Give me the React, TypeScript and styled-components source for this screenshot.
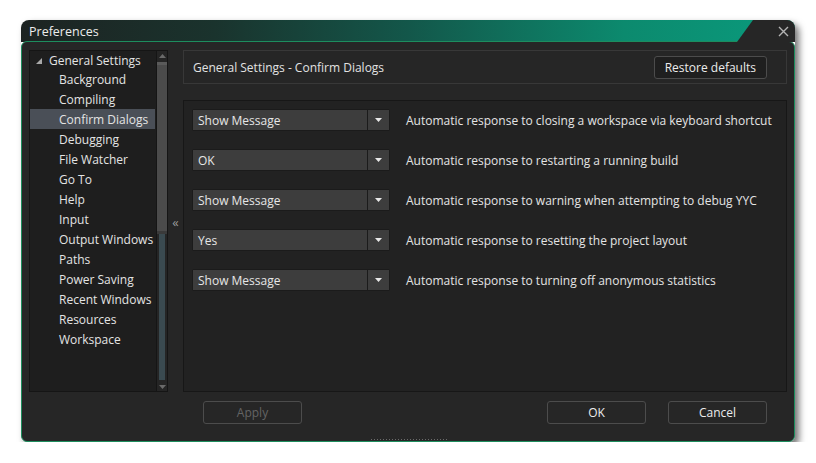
import React, { FC } from 'react'
import styled, { createGlobalStyle } from 'styled-components'

const GlobalStyle = createGlobalStyle`
  html, body {
    margin: 0;
    padding: 0;
    background: #ffffff;
  }
  body {
    font-family: "Open Sans", "Noto Sans", "DejaVu Sans", sans-serif;
    font-size: 12px;
    color: #e2e2e2;
  }
`

const Page = styled.div`
  padding: 20px 0 0 21px;
`

const Window = styled.div`
  position: relative;
  width: 774px;
  display: flex;
  flex-direction: column;
  border-radius: 8px 8px 6px 6px;
  box-shadow: 4px 4px 7px rgba(0, 0, 0, 0.55);
`

const TitleBar = styled.div`
  height: 22px;
  display: flex;
  align-items: stretch;
  border-radius: 8px 8px 0 0;
  background: linear-gradient(90deg, #1d2322 0%, #1a332d 25%, #13574a 50%, #0c8a6e 78%, #0a9b7d 100%);
  overflow: hidden;
`

const Title = styled.div`
  flex: 1;
  padding: 3px 0 0 8px;
  font-size: 12.5px;
  color: #ececec;
`

const CloseTab = styled.div`
  width: 58px;
  display: flex;
  align-items: center;
  justify-content: flex-end;
  padding-right: 6px;
  box-sizing: border-box;
  background: #262626;
  clip-path: polygon(16px 0, 100% 0, 100% 100%, 0 100%);
`

const Body = styled.div`
  height: 401px;
  box-sizing: border-box;
  margin-top: -1px;
  border: 1.5px solid #1d8d5e;
  border-radius: 6px;
  background: #262626;
  padding: 8px 7px 0 7px;
  display: grid;
  grid-template-columns: 139px 15px minmax(0, 1fr);
  grid-template-rows: 342px 1fr;
`

const Sidebar = styled.div`
  display: flex;
  box-sizing: border-box;
  background: #1e1e1e;
  border: 1px solid #151515;
`

const Tree = styled.div`
  flex: 1;
  padding: 1px 1px 0 0;
`

const TreeRow = styled.div<{ $depth: number; $selected?: boolean }>`
  height: ${p => (p.$depth === 0 ? 17 : 20)}px;
  display: flex;
  align-items: center;
  padding-left: ${p => (p.$depth === 0 ? 5 : 29)}px;
  background: ${p => (p.$selected ? '#4a4f57' : 'transparent')};
  color: #e4e4e4;
  white-space: nowrap;
`

const Expander = styled.svg`
  width: 8px;
  height: 8px;
  margin-right: 6px;
`

const ScrollBar = styled.div`
  width: 10px;
  display: flex;
  flex-direction: column;
  align-items: stretch;
  background: #252525;
  border-left: 1px solid #151515;
`

const ScrollArrow = styled.div`
  height: 9px;
  display: flex;
  align-items: center;
  justify-content: center;
`

const Thumb = styled.div`
  height: 166px;
  margin-top: 2px;
  background: #4b4b4b;
  border-top: 3px solid #5a5a5a;
  border-bottom: 3px solid #3a3a3a;
`

const Track = styled.div`
  flex: 1;
  margin: 0 2px 2px;
  background: #3a4a50;
`

const Collapse = styled.div`
  display: flex;
  align-items: center;
  justify-content: center;
  color: #9a9a9a;
  font-size: 13px;
  padding-top: 2px;
`

const Main = styled.div`
  display: flex;
  flex-direction: column;
  gap: 16px;
`

const Header = styled.div`
  height: 34px;
  box-sizing: border-box;
  display: flex;
  align-items: center;
  justify-content: space-between;
  padding: 0 19px 0 9px;
  border: 1px solid #383838;
`

const Button = styled.div<{ $disabled?: boolean; $dark?: boolean }>`
  height: 23px;
  box-sizing: border-box;
  min-width: 99px;
  padding: 0 10px;
  display: flex;
  align-items: center;
  justify-content: center;
  border: 1px solid #4c4c4c;
  border-radius: 3px;
  background: ${p => (p.$dark ? '#1f1f1f' : '#262626')};
  color: ${p => (p.$disabled ? '#646464' : '#ececec')};
`

const Content = styled.div`
  flex: 1;
  background: #222222;
  border: 1px solid #171717;
  padding: 8px 8px;
  display: flex;
  flex-direction: column;
  gap: 18px;
`

const Row = styled.div`
  display: flex;
  align-items: center;
  gap: 16px;
`

const Combo = styled.div`
  width: 198px;
  height: 22px;
  display: flex;
  gap: 1px;
  background: #1b1b1b;
  border: 1px solid #1b1b1b;
  border-radius: 2px;
  box-sizing: border-box;
`

const ComboValue = styled.div`
  flex: 1;
  display: flex;
  align-items: center;
  padding-left: 5px;
  background: #3d3d3d;
  color: #e6e6e6;
`

const ComboButton = styled.div`
  width: 21px;
  display: flex;
  align-items: center;
  justify-content: center;
  background: #3d3d3d;
`

const Label = styled.div`
  color: #e4e4e4;
  white-space: nowrap;
`

const Footer = styled.div`
  grid-column: 3;
  display: flex;
  align-items: flex-start;
  padding: 9px 20px 0 20px;
`

const Spacer = styled.div`
  flex: 1;
`

const ButtonGap = styled.div`
  width: 22px;
`

const Grip = styled.div`
  position: absolute;
  left: 349px;
  bottom: 1px;
  width: 77px;
  height: 3px;
  background-image: radial-gradient(circle, #6a6a6a 0.8px, transparent 1px);
  background-size: 3px 3px;
`

const treeItems = [
  'Background',
  'Compiling',
  'Confirm Dialogs',
  'Debugging',
  'File Watcher',
  'Go To',
  'Help',
  'Input',
  'Output Windows',
  'Paths',
  'Power Saving',
  'Recent Windows',
  'Resources',
  'Workspace',
]

const dialogs = [
  { value: 'Show Message', label: 'Automatic response to closing a workspace via keyboard shortcut' },
  { value: 'OK', label: 'Automatic response to restarting a running build' },
  { value: 'Show Message', label: 'Automatic response to warning when attempting to debug YYC' },
  { value: 'Yes', label: 'Automatic response to resetting the project layout' },
  { value: 'Show Message', label: 'Automatic response to turning off anonymous statistics' },
]

const Triangle: FC<{ down?: boolean; color: string }> = ({ down, color }) => (
  <svg width={7} height={4} viewBox="0 0 7 4">
    <path d={down ? 'M0 0H7L3.5 4Z' : 'M0 4H7L3.5 0Z'} fill={color} />
  </svg>
)

const App: FC = () => {
  return (
    <Page>
      <GlobalStyle />
      <Window>
        <TitleBar>
          <Title>Preferences</Title>
          <CloseTab>
            <svg width="11" height="11" viewBox="0 0 11 11">
              <path d="M1 1L10 10M10 1L1 10" stroke="#b4b4b4" strokeWidth="1.4" />
            </svg>
          </CloseTab>
        </TitleBar>
        <Body>
          <Sidebar>
            <Tree>
              <TreeRow $depth={0}>
                <Expander viewBox="0 0 8 8">
                  <path d="M7 1V7H1Z" fill="#a8a8a8" />
                </Expander>
                General Settings
              </TreeRow>
              {treeItems.map(item => (
                <TreeRow key={item} $depth={1} $selected={item === 'Confirm Dialogs'}>
                  {item}
                </TreeRow>
              ))}
            </Tree>
            <ScrollBar>
              <ScrollArrow>
                <Triangle color="#6a6a6a" />
              </ScrollArrow>
              <Thumb />
              <Track />
              <ScrollArrow>
                <Triangle down color="#6a6a6a" />
              </ScrollArrow>
            </ScrollBar>
          </Sidebar>
          <Collapse>«</Collapse>
          <Main>
            <Header>
              General Settings - Confirm Dialogs
              <Button $dark>Restore defaults</Button>
            </Header>
            <Content>
              {dialogs.map((d, i) => (
                <Row key={i}>
                  <Combo>
                    <ComboValue>{d.value}</ComboValue>
                    <ComboButton>
                      <Triangle down color="#e8e8e8" />
                    </ComboButton>
                  </Combo>
                  <Label>{d.label}</Label>
                </Row>
              ))}
            </Content>
          </Main>
          <Footer>
            <Button $disabled>Apply</Button>
            <Spacer />
            <Button>OK</Button>
            <ButtonGap />
            <Button>Cancel</Button>
          </Footer>
        </Body>
        <Grip />
      </Window>
    </Page>
  )
}

export default App
